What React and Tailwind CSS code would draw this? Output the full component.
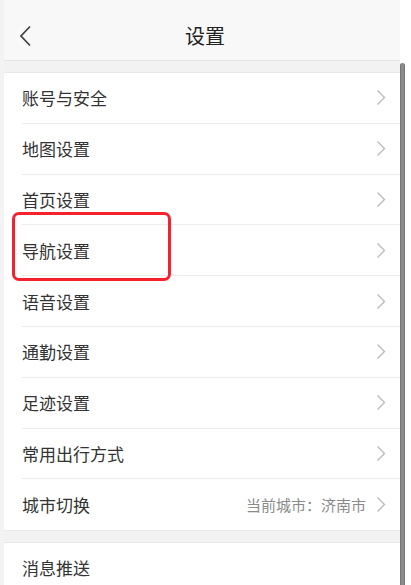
import React from "react";

const Chevron = () => (
  <svg width="10" height="17" viewBox="0 0 10 17" fill="none">
    <path d="M1.5 1.5 L8.5 8.5 L1.5 15.5" stroke="#b8b8b8" strokeWidth="1.3" strokeLinejoin="miter" />
  </svg>
);

const rows = ["账号与安全", "地图设置", "首页设置", "导航设置", "语音设置", "通勤设置", "足迹设置", "常用出行方式"];

const font = { fontFamily: '"Noto Sans CJK SC", "Noto Sans", sans-serif' };

function Row({ label, right, last, highlight }) {
  return (
    <div className="relative h-[50.8px] shrink-0 flex flex-col">
      <div className="flex-1 flex items-center pl-[18px] pr-[14px]">
        <span className="text-[17px] text-[#333] flex-1 leading-none">{label}</span>
        {right && <span className="text-[15px] text-[#8a8a8a] mr-[10px] leading-none">{right}</span>}
        <Chevron />
      </div>
      {!last && <div className="ml-[18px] h-px shrink-0 bg-[#ececec]" />}
      {highlight && (
        <div className="absolute left-[8px] top-[-13px] w-[159px] h-[69px] border-[3px] border-[#f5222d] rounded-[7px]" />
      )}
    </div>
  );
}

export default function App() {
  return (
    <div className="w-[411px] h-[585px] overflow-hidden flex bg-white" style={font}>
      <div className="w-[4px] shrink-0 bg-[#f3f3f3]" />
      <div className="flex-1 flex flex-col min-w-0">
        <div className="h-[61px] shrink-0 bg-[#f8f8f8] border-b border-[#e4e4e4] relative flex items-center justify-center">
          <svg className="absolute left-[15px] top-[25px]" width="14" height="22" viewBox="0 0 14 22" fill="none">
            <path d="M11 1.5 L2 11 L11 20.5" stroke="#444" strokeWidth="1.8" />
          </svg>
          <span className="text-[20px] text-[#222] mt-[11px] ml-[6px]">设置</span>
        </div>
        <div className="h-[12px] shrink-0 bg-[#f2f2f2] border-b border-[#e8e8e8]" />
        {rows.map((r) => (
          <Row key={r} label={r} highlight={r === "导航设置"} />
        ))}
        <Row label="城市切换" right="当前城市：济南市" last />
        <div className="h-[13px] shrink-0 bg-[#f2f2f2] border-y border-[#e8e8e8]" />
        <div className="h-[48px] shrink-0 flex items-center pl-[18px]">
          <span className="text-[17px] text-[#333] leading-none">消息推送</span>
        </div>
      </div>
      <div className="w-[5px] shrink-0 mt-[63px] bg-[#8c8c8c] rounded-t-[3px] border-x border-[#777]" />
      <div className="w-[6px] shrink-0 bg-white" />
    </div>
  );
}
